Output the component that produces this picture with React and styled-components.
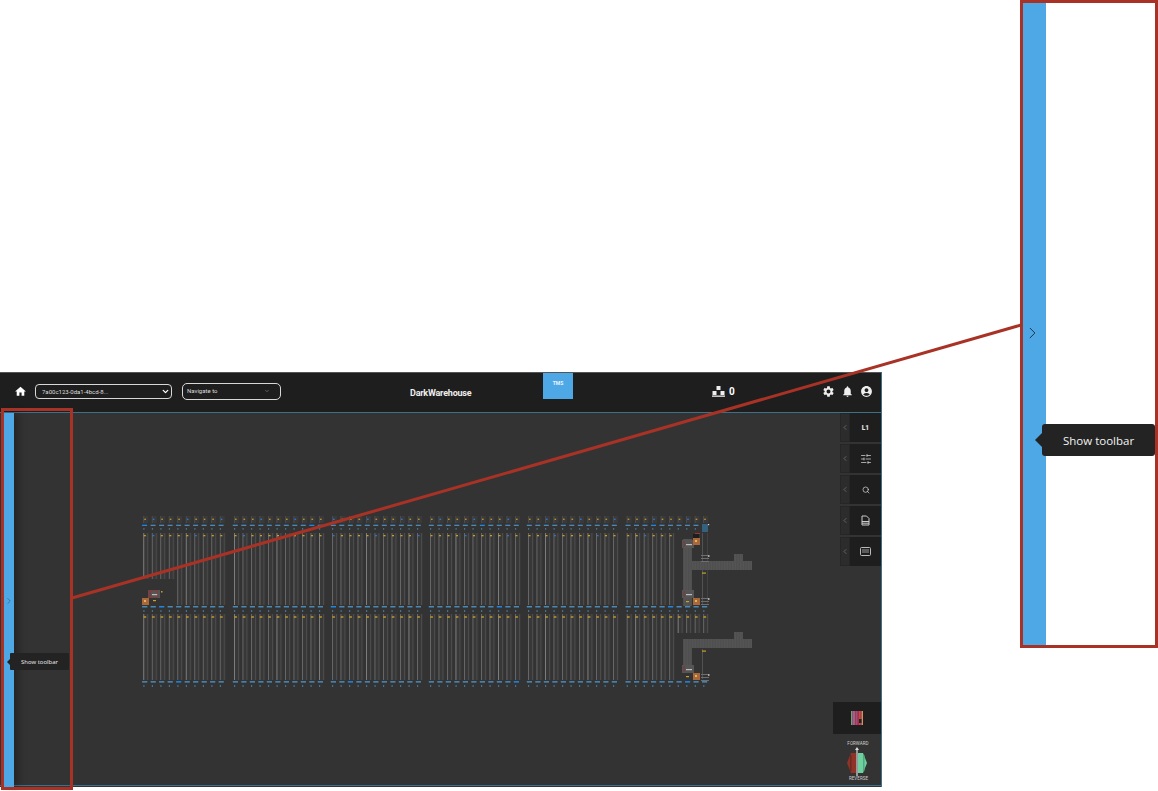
import React from 'react';
import styled, { createGlobalStyle } from 'styled-components';
import { ChevronLeft, ChevronRight, ChevronDown, SlidersHorizontal, Search } from 'lucide-react';
import { MdHome, MdSettings, MdNotifications, MdAccountCircle } from 'react-icons/md';

const GlobalStyle = createGlobalStyle`
  html, body { margin: 0; padding: 0; background: #fff; }
  body { font-family: "Roboto", "Liberation Sans", sans-serif; }
`;

const Page = styled.div`
  position: relative;
  width: 1158px;
  height: 791px;
  padding-top: 372px;
  box-sizing: border-box;
  overflow: hidden;
  background: #fff;
`;

const Shot = styled.div`
  position: relative;
  width: 882px;
  height: 415px;
  display: flex;
  flex-direction: column;
  background: #333;
  border-right: 1px solid #3f7089;
  box-sizing: border-box;
`;

const TopBar = styled.header`
  height: 37px;
  padding-bottom: 2px;
  flex: none;
  display: flex;
  align-items: center;
  background: #1e1e1e;
  border-top: 1px solid #555;
  border-bottom: 1px solid #3f7089;
  box-sizing: content-box;
  color: #fff;
`;

const HomeBtn = styled.span`
  display: flex;
  margin-left: 14px;
  margin-right: 8px;
`;

const Select = styled.div`
  width: 137px;
  height: 15px;
  display: flex;
  align-items: center;
  justify-content: space-between;
  box-sizing: border-box;
  padding: 0 1px 0 6px;
  border: 1px solid #d8d8d8;
  border-radius: 4px;
  font-size: 6px;
  color: #ddd;
`;

const NavSelect = styled(Select)`
  width: 99px;
  height: 17px;
  margin-left: 10px;
  padding: 0 10px 2px 4px;
  border-radius: 5px;
`;

const Brand = styled.div`
  margin-left: 129px;
  width: 62px;
  font-size: 9px;
  font-weight: 700;
  letter-spacing: -0.2px;
  white-space: nowrap;
  color: #eee;
  padding-top: 2px;
`;

const TmsTab = styled.div`
  align-self: flex-start;
  width: 30px;
  height: 26px;
  margin-left: 71px;
  padding-top: 7px;
  box-sizing: border-box;
  background: #4fa8e6;
  color: #e8f4fc;
  font-size: 5px;
  font-weight: 700;
  text-align: center;
`;

const Counter = styled.div`
  margin-left: 139px;
  display: flex;
  align-items: center;
  gap: 4px;
  font-size: 10px;
  font-weight: 700;
`;

const BarIcons = styled.div`
  margin-left: auto;
  margin-right: 8px;
  display: flex;
  align-items: center;
  gap: 6px;
`;

const Body = styled.div`
  position: relative;
  flex: 1;
  display: flex;
  min-height: 0;
  border-bottom: 1px solid #3f7089;
  margin-bottom: 1px;
`;

const Rail = styled.div`
  flex: none;
  width: 11px;
  margin-left: 3px;
  margin-bottom: -2px;
  display: flex;
  align-items: center;
  justify-content: center;
  background: #4fa8e6;
  box-shadow: 4px 0 9px rgba(0, 0, 0, 0.35);
  color: #35536a;
  padding-top: 2px;
  box-sizing: border-box;
`;

const Canvas = styled.div`
  flex: 1;
  padding: 101px 0 0 126px;
`;

const Tooltip = styled.div`
  position: absolute;
  left: 10px;
  top: 240px;
  width: 59px;
  height: 17px;
  display: flex;
  align-items: center;
  justify-content: center;
  border-radius: 1px;
  background: #232323;
  color: #eee;
  font-family: "Open Sans", "Liberation Sans", sans-serif;
  font-size: 6px;

  &::before {
    content: '';
    position: absolute;
    left: -3px;
    top: 5.5px;
    border-top: 3px solid transparent;
    border-bottom: 3px solid transparent;
    border-right: 3px solid #232323;
  }
`;

const ToolStack = styled.div`
  position: absolute;
  right: 0;
  top: 0;
  display: flex;
  flex-direction: column;
  gap: 2px;
`;

const Tool = styled.div`
  width: 41px;
  height: 29px;
  display: flex;
`;

const ToolToggle = styled.div`
  width: 10px;
  display: flex;
  align-items: center;
  justify-content: center;
  background: #2c2c2c;
  border: 1px solid #262626;
  box-sizing: border-box;
  color: #a0a0a0;
`;

const ToolFace = styled.div`
  flex: 1;
  display: flex;
  align-items: center;
  justify-content: center;
  background: #1e1e1e;
  color: #e2e2e2;
  font-size: 6.5px;
  font-weight: 900;
`;

const LegendDock = styled.div`
  position: absolute;
  right: 0;
  bottom: 0;
  width: 48px;
  display: flex;
  flex-direction: column;
  align-items: center;
`;

const LegendBox = styled.div`
  width: 48px;
  height: 32px;
  display: flex;
  align-items: center;
  justify-content: center;
  background: #1e1e1e;
  margin-bottom: 7px;
`;

const DirLabel = styled.div`
  font-size: 4.5px;
  line-height: 6px;
  letter-spacing: 0.05px;
  color: #d0d0d0;
  margin-left: 2px;
`;

const ReverseLabel = styled(DirLabel)`
  margin-bottom: 3px;
  margin-left: 3px;
`;

const Annotation = styled.svg`
  position: absolute;
  left: 0;
  top: 0;
  pointer-events: none;
`;

const HighlightBox = styled.div`
  position: absolute;
  left: 1px;
  top: 408px;
  width: 72px;
  height: 382px;
  box-sizing: border-box;
  border: 3px solid #a93226;
`;

const Callout = styled.aside`
  position: absolute;
  right: 0;
  top: 0;
  width: 138px;
  height: 648px;
  box-sizing: border-box;
  display: flex;
  background: #fff;
  border: 3px solid #a93226;
`;

const CalloutRail = styled.div`
  width: 23px;
  padding-top: 320px;
  box-sizing: border-box;
  background: #4fa8e6;
  color: #16222c;
  display: flex;
  justify-content: center;
  align-items: flex-start;
  padding-right: 4px;
`;

const CalloutTip = styled.div`
  position: absolute;
  left: 19px;
  top: 421px;
  width: 113px;
  height: 32px;
  display: flex;
  align-items: center;
  padding-left: 21px;
  box-sizing: border-box;
  border-radius: 3px;
  background: #232323;
  color: #f2f2f2;
  font-family: "Open Sans", "Liberation Sans", sans-serif;
  font-size: 11.5px;

  &::before {
    content: '';
    position: absolute;
    left: -7px;
    top: 9px;
    border-top: 7px solid transparent;
    border-bottom: 7px solid transparent;
    border-right: 7px solid #232323;
  }
`;

const BoxesIcon = () => (
  <svg width="13" height="11" viewBox="0 0 13 11" fill="#eee">
    <rect x="4.5" y="0" width="4" height="4" />
    <rect x="0.5" y="5" width="4" height="4" />
    <rect x="8.5" y="5" width="4" height="4" />
    <rect x="0" y="9.5" width="13" height="1.3" />
  </svg>
);

const DocIcon = () => (
  <svg width="9" height="11" viewBox="0 0 9 11" fill="none" stroke="#ccc" strokeWidth="1">
    <path d="M1 1h4.5L8 3.5V10H1z" />
    <path d="M1 6.5h7M1 8.2h7" />
  </svg>
);

const CardIcon = () => (
  <svg width="11" height="9" viewBox="0 0 11 9" fill="none" stroke="#bbb" strokeWidth="1">
    <rect x="0.5" y="0.5" width="10" height="8" rx="1" />
    <path d="M2 3h7M2 5h7" stroke="#999" />
  </svg>
);

const LegendIcon = () => {
  const stripes = ['#7f9c7a', '#a0608a', '#c8506a', '#7a5a9a', '#c03040', '#d04050', '#b04030', '#d09070'];
  return (
    <svg width="12" height="14" viewBox="0 0 12 14">
      {stripes.map((c, i) => <rect key={i} x={i * 1.5} y="0" width="1.5" height="14" fill={c} />)}
      <rect x="8" y="8" width="2.5" height="4" fill="#222" />
    </svg>
  );
};

const DirectionIcon = () => (
  <svg width="24" height="29" viewBox="0 1 24 29">
    <path d="M2 17 L6 7 H11 V27 H6 Z" fill="#8e3326" />
    <path d="M5 9 h1.5 v16 h-1.5z" fill="#6b2a20" />
    <path d="M13 7 H18 L22 17 L18 27 H13 Z" fill="#6fcf9f" />
    <path d="M18 9 h1.5 v16 h-1.5z" fill="#4da87c" />
    <path d="M12 1 L14 4 H12.6 V30 H11.4 V4 H10 Z" fill="#ddd" />
  </svg>
);

// column x positions of the warehouse plan, ten or eleven per block
const blocks = [[143.3, 10], [234, 11], [332, 11], [430, 11], [528, 11], [626.7, 10]];
const columns = blocks.flatMap(([start, count]) =>
  Array.from({ length: count }, (_, i) => start + i * 8.5)
);

const dashColor = (i, row) => ((i * 7 + row * 5) % 19 === 0 ? '#1f86e6' : '#4a8ab8');

const PlanColumn = ({ x, i }) => {
  const line = i % 5 === 0 ? '#858585' : '#6c6c6c';
  const tail = x >= 677;
  const head = x < 170;
  const upperEnd = head ? 578 : 604;
  const lowerEnd = tail ? 632 : 679;
  return (
    <g>
      <rect x={x} y="515" width="5" height="7" fill="#3a3a3a" />
      <rect x={x} y="515" width="0.8" height="7" fill="#505050" />
      <rect x={x + 1} y="517.6" width="1.6" height="1.4" fill={i % 4 === 1 ? '#2f74cc' : '#b8912a'} />
      <rect x={x - 1.2} y="523.7" width="5" height="1.3" fill={dashColor(i, 0)} />
      <rect x={x} y="527" width="1.2" height="1.8" fill="#44728f" />
      {!tail && <rect x={x} y="532" width="6" height={upperEnd - 532} fill="#383838" />}
      {!tail && <rect x={x} y="532" width="0.9" height={upperEnd - 532} fill={line} />}
      {!tail && <rect x={x + 4} y="532" width="0.8" height={upperEnd - 532} fill="#505050" />}
      {!tail && <rect x={x + 0.5} y="534" width="2" height="1.3" fill={i % 5 === 1 ? '#2f74cc' : '#c9a02c'} />}
      <rect x={x - 1.2} y="605" width="5.2" height="1.5" fill={dashColor(i, 1)} />
      <rect x={x} y="609" width="1.2" height="2" fill="#44728f" />
      <rect x={x} y="613" width="6" height={lowerEnd - 613} fill="#383838" />
      <rect x={x} y="613" width="0.9" height={lowerEnd - 613} fill={line} />
      <rect x={x + 4} y="613" width="0.8" height={lowerEnd - 613} fill="#505050" />
      <rect x={x + 0.3} y="615.3" width="2.6" height="1.4" fill="#c9a02c" />
      <rect x={x - 1.2} y="680.1" width="5.2" height="1.5" fill={dashColor(i, 2)} />
      <rect x={x} y="684" width="1.2" height="2" fill="#44728f" />
    </g>
  );
};

const Station = ({ x, y }) => (
  <g>
    <rect x={x} y={y} width="7" height="7" fill="#a8683a" />
    <rect x={x + 2} y={y + 2} width="2" height="2" fill="#e6b060" />
  </g>
);

const Transfer = ({ x, y }) => (
  <g>
    <rect x={x} y={y} width="12" height="8" fill="#555" />
    <rect x={x + 4} y={y + 4} width="6" height="1.2" fill="#bcbcbc" />
    <rect x={x + 1.5} y={y + 1} width="1.2" height="6" fill="#7a3a3a" />
  </g>
);

const Rack = ({ x, y }) => (
  <g fill="#6e6e6e">
    <rect x={x} y={y} width="8" height="1" />
    <rect x={x} y={y + 3} width="8" height="1" />
    <rect x={x} y={y + 6} width="8" height="1" />
    <rect x={x + 7} y={y} width="1.5" height="2" fill="#aaa" />
  </g>
);

const Conveyor = ({ x, y, w, h }) => <rect x={x} y={y} width={w} height={h} fill="url(#hatch)" />;

const WarehousePlan = () => (
  <svg width="620" height="175" viewBox="140 513 620 175" style={{ display: 'block' }}>
    <defs>
      <pattern id="hatch" width="1.6" height="1.6" patternUnits="userSpaceOnUse">
        <rect width="1.6" height="1.6" fill="#555" />
        <rect width="0.5" height="1.6" fill="#4a4a4a" />
      </pattern>
    </defs>
    {columns.map((x, i) => <PlanColumn key={x} x={x} i={i} />)}

    <Station x={142} y={597} />
    <Transfer x={148} y={589} />
    <rect x="148.5" y="589.5" width="9" height="7" fill="none" stroke="#8a3a3a" strokeWidth="0.8" />
    <rect x="153" y="599" width="3" height="1.2" fill="#c9a02c" />
    <rect x="161" y="590" width="1.5" height="1.5" fill="#c9a02c" />

    <rect x="702" y="523" width="6" height="8" fill="#35617f" />
    <rect x="708" y="523" width="1.2" height="1.2" fill="#ddd" />
    <rect x="702" y="532" width="0.8" height="72" fill="#5a5a5a" />
    <rect x="707" y="532" width="0.8" height="72" fill="#474747" />
    <rect x="702" y="648" width="0.8" height="30" fill="#5a5a5a" />

    <Conveyor x={683} y={538} w={9} h={67} />
    <Conveyor x={683} y={560} w={69} h={9} />
    <Conveyor x={734} y={553} w={9} h={8} />
    <Conveyor x={683} y={638} w={69} h={9} />
    <Conveyor x={734} y={631} w={9} h={8} />
    <Conveyor x={683} y={647} w={9} h={17} />

    <Transfer x={682} y={539} />
    <Transfer x={682} y={589} />
    <Transfer x={682} y={664} />

    <Station x={693} y={537} />
    <rect x="693" y="533" width="6" height="4" fill="#1e1e1e" />
    <rect x="695" y="532" width="5" height="1" fill="#a83232" />
    <Station x={693} y={597} />
    <Station x={693} y={672} />

    <Rack x={701} y={554} />
    <Rack x={701} y={597} />
    <Rack x={701} y={673} />

    <rect x="702" y="571.5" width="4" height="1.2" fill="#c9a02c" />
    <rect x="702" y="649.5" width="4" height="1.2" fill="#c9a02c" />
    <rect x="686" y="600" width="3" height="1.2" fill="#c9a02c" />
    <rect x="686" y="675" width="3" height="1.2" fill="#c9a02c" />
  </svg>
);

const tools = [
  { key: 'level', face: 'L1' },
  { key: 'filters', face: <SlidersHorizontal size={12} strokeWidth={1.4} /> },
  { key: 'search', face: <Search size={8} strokeWidth={2} /> },
  { key: 'doc', face: <DocIcon /> },
  { key: 'card', face: <CardIcon /> },
];

const App = () => (
  <>
    <GlobalStyle />
    <Page>
      <Shot>
        <TopBar>
          <HomeBtn><MdHome size={13} color="#fff" /></HomeBtn>
          <Select>
            <span>7a00c123-0da1-4bcd-8...</span>
            <ChevronDown size={9} strokeWidth={3.5} color="#fff" />
          </Select>
          <NavSelect>
            <span>Navigate to</span>
            <ChevronDown size={6} color="#999" />
          </NavSelect>
          <Brand>DarkWarehouse</Brand>
          <TmsTab>TMS</TmsTab>
          <Counter><BoxesIcon />0</Counter>
          <BarIcons>
            <MdSettings size={13} color="#eee" />
            <MdNotifications size={13} color="#eee" />
            <MdAccountCircle size={13} color="#eee" />
          </BarIcons>
        </TopBar>
        <Body>
          <Rail><ChevronRight size={10} strokeWidth={1.4} /></Rail>
          <Canvas><WarehousePlan /></Canvas>
          <Tooltip>Show toolbar</Tooltip>
          <ToolStack>
            {tools.map((t) => (
              <Tool key={t.key}>
                <ToolToggle><ChevronLeft size={11} strokeWidth={1.4} /></ToolToggle>
                <ToolFace>{t.face}</ToolFace>
              </Tool>
            ))}
          </ToolStack>
          <LegendDock>
            <LegendBox><LegendIcon /></LegendBox>
            <DirLabel>FORWARD</DirLabel>
            <DirectionIcon />
            <ReverseLabel>REVERSE</ReverseLabel>
          </LegendDock>
        </Body>
      </Shot>

      <HighlightBox />
      <Annotation width="1158" height="791">
        <line x1="72" y1="598" x2="1021" y2="325" stroke="#a93226" strokeWidth="3" />
      </Annotation>
      <Callout>
        <CalloutRail><ChevronRight size={20} strokeWidth={1.1} /></CalloutRail>
        <CalloutTip>Show toolbar</CalloutTip>
      </Callout>
    </Page>
  </>
);

export default App;
